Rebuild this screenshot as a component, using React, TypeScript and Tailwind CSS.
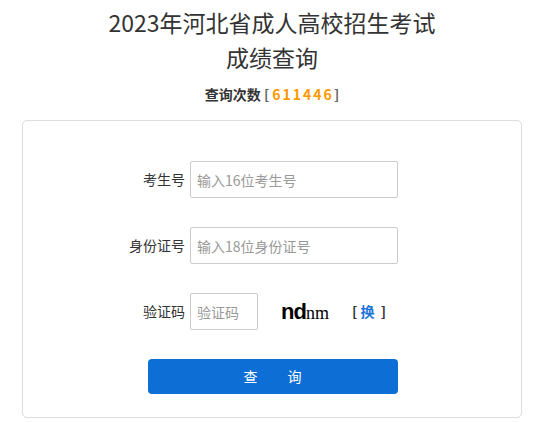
import React from "react";

const font = { fontFamily: '"Noto Sans CJK SC", "Noto Sans", sans-serif' };

function Row({ label, children }: { label: string; children: React.ReactNode }) {
  return (
    <div className="flex items-center">
      <label className="w-[167px] pr-[5px] text-right text-[14px] text-[#333]">{label}</label>
      {children}
    </div>
  );
}

export default function App() {
  return (
    <div className="w-[544px] min-h-[423px] bg-white text-[#333]" style={font}>
      <div className="pt-[5px] text-center">
        <h1 className="text-[23px] leading-[35px] font-normal text-[#333]">
          2023年河北省成人高校招生考试
          <br />
          成绩查询
        </h1>
        <p className="mt-[9px] text-[14px] leading-[20px] font-bold text-[#333]">
          查询次数 <span className="mr-[3px] text-[#666]">[</span>
          <span className="text-[#ff9900] tracking-[2px]">61144</span>
          <span className="text-[#ff9900]">6</span>
          <span className="ml-[2px] text-[#666]">]</span>
        </p>
      </div>

      <div className="mx-[22px] mt-[16px] rounded-[5px] border border-[#dddddd] pt-[40px] pb-[23px]">
        <div className="flex flex-col gap-[29px]">
          <Row label="考生号">
            <input
              className="h-[37px] w-[208px] rounded-[2px] border border-[#cccccc] px-[6px] text-[14px] outline-none placeholder:text-[#999]"
              placeholder="输入16位考生号"
            />
          </Row>
          <Row label="身份证号">
            <input
              className="h-[37px] w-[208px] rounded-[2px] border border-[#cccccc] px-[6px] text-[14px] outline-none placeholder:text-[#999]"
              placeholder="输入18位身份证号"
            />
          </Row>
          <Row label="验证码">
            <input
              className="h-[37px] w-[68px] rounded-[2px] border border-[#cccccc] px-[6px] text-[14px] outline-none placeholder:text-[#999]"
              placeholder="验证码"
            />
            <span className="ml-[23px] flex w-[54px] items-baseline leading-none text-black">
              <span className="text-[22px] font-bold tracking-[-1px]" style={{ fontFamily: '"Liberation Sans", sans-serif' }}>nd</span>
              <span className="text-[18px]" style={{ fontFamily: '"Liberation Serif", serif' }}>nm</span>
            </span>
            <span className="ml-[17px] whitespace-pre text-[14px] font-bold text-[#333]">
              {"[ "}<a className="text-[#1a73d6]">换</a>{"  ]"}
            </span>
          </Row>
          <div className="pl-[125px]">
            <button className="h-[35px] w-[250px] rounded-[4px] bg-[#0d6fd6] text-[14px] text-white tracking-[1px]">
              查&nbsp;&nbsp;&nbsp;&nbsp;&nbsp;&nbsp;&nbsp;询
            </button>
          </div>
        </div>
      </div>
    </div>
  );
}
